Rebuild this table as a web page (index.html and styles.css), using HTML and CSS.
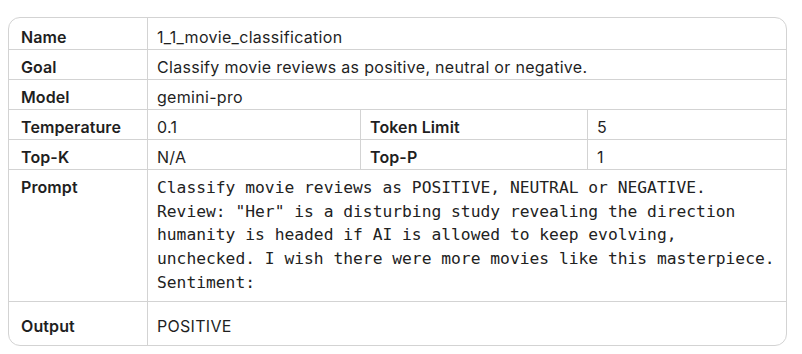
FILE: index.html
```html
<!DOCTYPE html>
<html lang="en">
<head>
<meta charset="utf-8">
<title>1_1_movie_classification</title>
<link rel="stylesheet" href="styles.css">
</head>
<body>
<div class="page">
  <div class="sheet">
    <div class="cell label first">Name</div>
    <div class="cell value first span3 last-col">1_1_movie_classification</div>

    <div class="cell label">Goal</div>
    <div class="cell value span3 last-col">Classify movie reviews as positive, neutral or negative.</div>

    <div class="cell label">Model</div>
    <div class="cell value span3 last-col">gemini-pro</div>

    <div class="cell label">Temperature</div>
    <div class="cell value">0.1</div>
    <div class="cell label inner">Token Limit</div>
    <div class="cell value last-col">5</div>

    <div class="cell label">Top-K</div>
    <div class="cell value">N/A</div>
    <div class="cell label inner">Top-P</div>
    <div class="cell value last-col">1</div>

    <div class="cell label prompt-label">Prompt</div>
    <div class="cell value span3 last-col prompt">Classify movie reviews as POSITIVE, NEUTRAL or NEGATIVE.
Review: "Her" is a disturbing study revealing the direction
humanity is headed if AI is allowed to keep evolving,
unchecked. I wish there were more movies like this masterpiece.
Sentiment:</div>

    <div class="cell label output bottom">Output</div>
    <div class="cell value span3 last-col output bottom">POSITIVE</div>
  </div>
</div>
</body>
</html>
```

FILE: styles.css
```css
html, body {
  margin: 0;
  padding: 0;
  background: #ffffff;
}

body {
  font-family: Inter, Roboto, "Liberation Sans", Arial, sans-serif;
  color: #1f1f1f;
  font-size: 16px;
}

.page {
  padding: 17px 0 0 8px;
}

.sheet {
  width: 779px;
  box-sizing: border-box;
  border: 1px solid #d3d3d3;
  border-radius: 12px;
  overflow: hidden;
  display: grid;
  grid-template-columns: 139px 213px 227px 1fr;
  grid-template-rows: 32px 30px 30px 30px 30px 132px 43px;
}

.cell {
  box-sizing: border-box;
  border-right: 1px solid #d3d3d3;
  border-bottom: 1px solid #d3d3d3;
  line-height: 20px;
  padding: 7px 8px 0 8px;
  white-space: nowrap;
}

.cell.first {
  padding-top: 9px;
}

.cell.label {
  font-weight: 600;
  padding-left: 12px;
  letter-spacing: 0.1px;
}

.cell.label.inner {
  padding-left: 9px;
}

.cell.value {
  padding-left: 9px;
  letter-spacing: 0.3px;
}

.span3 {
  grid-column: span 3;
}

.last-col {
  border-right: none;
}

.bottom {
  border-bottom: none;
}

.cell.output {
  padding-top: 14px;
}

.cell.prompt-label {
  padding-top: 7px;
}

.cell.prompt {
  font-family: "DejaVu Sans Mono", "Liberation Mono", monospace;
  font-size: 16.3px;
  line-height: 23.7px;
  letter-spacing: 0;
  padding-top: 6px;
  white-space: pre;
  color: #222222;
}
```
